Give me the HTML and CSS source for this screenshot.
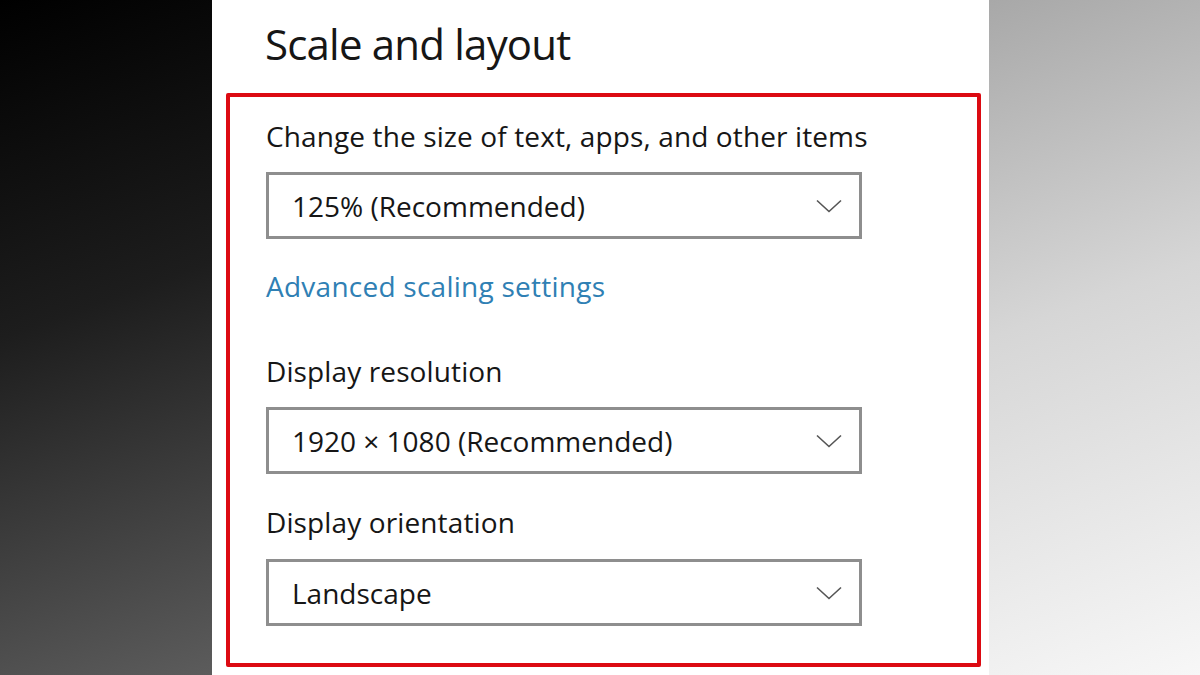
FILE: index.html
```html
<!DOCTYPE html>
<html lang="en">
<head>
    <meta charset="UTF-8">
    <meta name="viewport" content="width=device-width, initial-scale=1.0">
    <title>Scale and layout</title>
    <link rel="stylesheet" href="styles.css">
</head>
<body>
<div class="page">
    <div class="side side-left"></div>

    <main class="panel">
        <h1 class="title">Scale and layout</h1>

        <!-- highlighted settings group -->
        <section class="highlight">
            <label class="label" for="scale">Change the size of text, apps, and other items</label>
            <div class="select" id="scale">
                <span>125% (Recommended)</span>
                <svg class="chevron" width="26" height="14" viewBox="0 0 26 14"><path d="M1 1.5 L13 12.5 L25 1.5" /></svg>
            </div>

            <a class="link" href="#">Advanced scaling settings</a>

            <label class="label label-res" for="resolution">Display resolution</label>
            <div class="select" id="resolution">
                <span>1920 × 1080 (Recommended)</span>
                <svg class="chevron" width="26" height="14" viewBox="0 0 26 14"><path d="M1 1.5 L13 12.5 L25 1.5" /></svg>
            </div>

            <label class="label label-orient" for="orientation">Display orientation</label>
            <div class="select" id="orientation">
                <span>Landscape</span>
                <svg class="chevron" width="26" height="14" viewBox="0 0 26 14"><path d="M1 1.5 L13 12.5 L25 1.5" /></svg>
            </div>
        </section>
    </main>

    <div class="side side-right"></div>
</div>
</body>
</html>
```

FILE: styles.css
```css
/* Settings page: scale and layout */
body {
    margin: 0;
    padding: 0;
    font-family: "Open Sans", "Noto Sans", sans-serif;
    color: #161616;
}
.page {
    display: flex;
    width: 1200px;
    height: 675px;
    overflow: hidden;
}
.side {
    height: 100%;
}
.side-left {
    width: 212px;
    background: linear-gradient(160deg, #000 0%, #1d1d1d 45%, #5c5c5c 100%);
}
.side-right {
    flex: 1;
    background: linear-gradient(160deg, #a8a8a8 0%, #d6d6d6 45%, #f7f7f7 100%);
}
.panel {
    width: 777px;
    background-color: #fff;
    padding: 16px 8px 0 14px;
    box-sizing: border-box;
}
.title {
    margin: 0 0 21px 39px;
    font-size: 42px;
    font-weight: normal;
    line-height: 56px;
    letter-spacing: -0.8px;
}
.highlight {
    border: 4px solid #dc0a12;
    border-radius: 2px;
    padding: 21px 36px 37px;
    display: flex;
    flex-direction: column;
    align-items: flex-start;
}
.label {
    display: block;
    font-size: 28px;
    line-height: 36px;
    letter-spacing: 0.12px;
    margin-bottom: 18px;
}
.label-res {
    margin-top: 49px;
}
.label-orient {
    margin-top: 30px;
    margin-bottom: 19px;
}
.select {
    width: 596px;
    height: 67px;
    box-sizing: border-box;
    border: 3px solid #8e8e8e;
    padding: 0 17px 0 23px;
    display: flex;
    align-items: center;
    justify-content: space-between;
    font-size: 28px;
}
.chevron path {
    fill: none;
    stroke: #555;
    stroke-width: 1.6;
}
.link {
    margin-top: 29px;
    font-size: 28px;
    line-height: 36px;
    letter-spacing: 0.25px;
    color: #2f80b4;
    text-decoration: none;
}
```
